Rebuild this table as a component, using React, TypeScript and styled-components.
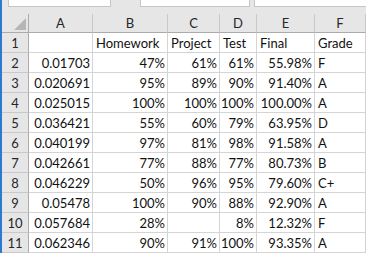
import styled, { createGlobalStyle } from "styled-components";

const GlobalStyle = createGlobalStyle`
    html, body {
        margin: 0;
        padding: 0;
        background: #ffffff;
        overflow: hidden;
    }
    body {
        font-family: Lato, "Liberation Sans", sans-serif;
    }
`;

type Cell = string;

const columns = ["A", "B", "C", "D", "E", "F"];

const rows: Cell[][] = [
    ["", "Homework", "Project", "Test", "Final", "Grade"],
    ["0.01703", "47%", "61%", "61%", "55.98%", "F"],
    ["0.020691", "95%", "89%", "90%", "91.40%", "A"],
    ["0.025015", "100%", "100%", "100%", "100.00%", "A"],
    ["0.036421", "55%", "60%", "79%", "63.95%", "D"],
    ["0.040199", "97%", "81%", "98%", "91.58%", "A"],
    ["0.042661", "77%", "88%", "77%", "80.73%", "B"],
    ["0.046229", "50%", "96%", "95%", "79.60%", "C+"],
    ["0.05478", "100%", "90%", "88%", "92.90%", "A"],
    ["0.057684", "28%", "", "8%", "12.32%", "F"],
    ["0.062346", "90%", "91%", "100%", "93.35%", "A"],
];

// numbers and percentages sit on the right like in excel
const isNumeric = (value: string) => /^[0-9.]+%?$/.test(value);

const App = () => {
    return (
        <>
            <GlobalStyle />
            <Window>
                <BlueEdge />
                <Main>
                    <Toolbar>
                        <NameBox />
                        <FunctionBox />
                        <FormulaBox />
                    </Toolbar>
                    <Sheet>
                        <Corner>
                            <CornerTriangle />
                        </Corner>
                        {columns.map((col) => (
                            <ColumnHeader key={col}>{col}</ColumnHeader>
                        ))}
                        {rows.map((row, rowIndex) => (
                            <Row key={rowIndex} row={row} index={rowIndex + 1} />
                        ))}
                    </Sheet>
                </Main>
            </Window>
        </>
    );
};

const Row = ({ row, index }: { row: Cell[]; index: number }) => (
    <>
        <RowHeader>{index}</RowHeader>
        {row.map((value, i) => (
            <DataCell key={i} $right={isNumeric(value)}>
                {value}
            </DataCell>
        ))}
    </>
);

export default App;

const Window = styled.div`
    display: flex;
    width: 366px;
    height: 253px;
    overflow: hidden;
    background: #e6e6e6;
`;

const BlueEdge = styled.div`
    width: 2px;
    flex-shrink: 0;
    background: #2b79d0;
`;

const Main = styled.div`
    flex: 1;
    display: flex;
    flex-direction: column;
    min-width: 0;
`;

const Toolbar = styled.div`
    height: 17px;
    display: flex;
    align-items: flex-start;
    padding-left: 6px;
    background: #e6e6e6;
`;

const Box = styled.div`
    height: 6px;
    background: #ffffff;
    border: 1px solid #c6c6c6;
    border-top: none;
`;

const NameBox = styled(Box)`
    width: 101px;
    margin-right: 29px;
`;

const FunctionBox = styled(Box)`
    width: 108px;
    margin-right: 4px;
`;

const FormulaBox = styled(Box)`
    flex: 1;
    border-right: none;
`;

const Sheet = styled.div`
    display: grid;
    grid-template-columns: 27px 64px 75px 52px 37px 58px 1fr;
    grid-template-rows: 19px;
    grid-auto-rows: 20px;
    background: #ffffff;
    font-size: 13px;
    color: #111111;
`;

const HeaderBase = styled.div`
    box-sizing: border-box;
    background: #e6e6e6;
    color: #262626;
    display: flex;
    align-items: center;
    justify-content: center;
    line-height: 1;
`;

const Corner = styled(HeaderBase)`
    border-right: 1px solid #ababab;
    border-bottom: 1px solid #ababab;
    justify-content: flex-end;
    align-items: flex-end;
    padding: 0 2px 2px 0;
`;

const CornerTriangle = styled.div`
    width: 0;
    height: 0;
    border-left: 12px solid transparent;
    border-bottom: 12px solid #b6b6b6;
`;

const ColumnHeader = styled(HeaderBase)`
    border-right: 1px solid #c9c9c9;
    border-bottom: 1px solid #ababab;
    padding-top: 1px;
`;

const RowHeader = styled(HeaderBase)`
    border-right: 1px solid #ababab;
    border-bottom: 1px solid #c9c9c9;
    padding-top: 1px;
`;

const DataCell = styled.div<{ $right: boolean }>`
    box-sizing: border-box;
    border-right: 1px solid #d4d4d4;
    border-bottom: 1px solid #d4d4d4;
    display: flex;
    align-items: center;
    justify-content: ${({ $right }) => ($right ? "flex-end" : "flex-start")};
    padding: 1px 2px 0 3px;
    white-space: nowrap;
    overflow: hidden;
    line-height: 1;
`;
